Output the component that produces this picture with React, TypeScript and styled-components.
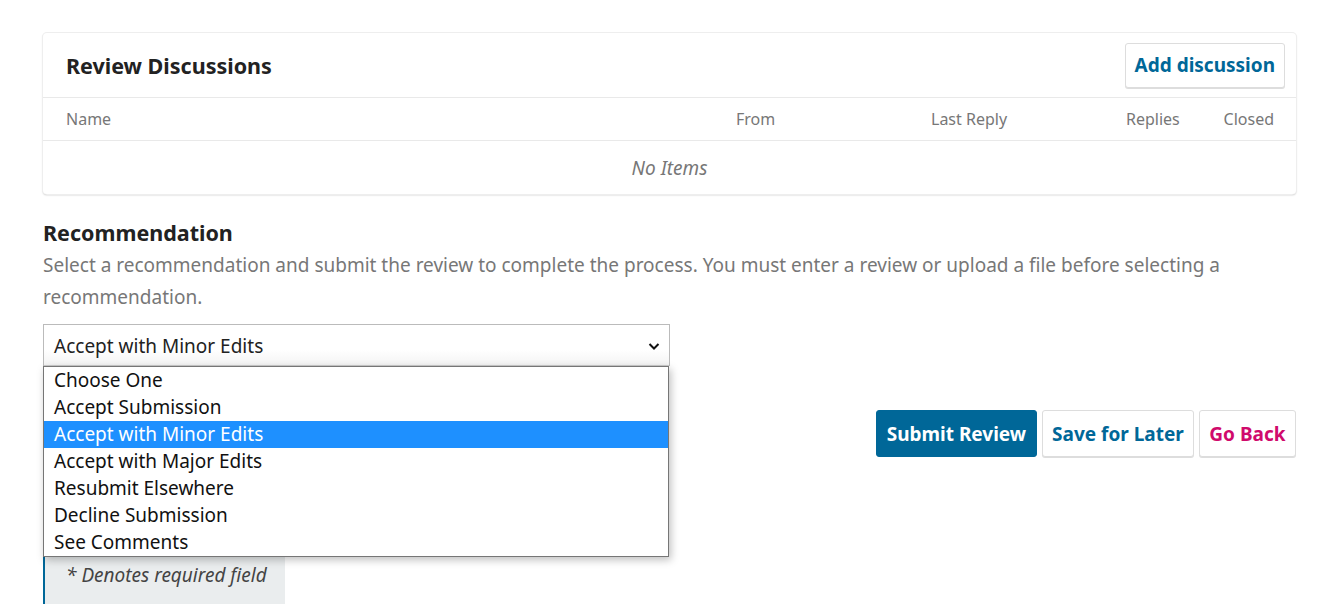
import React from "react";
import styled, { createGlobalStyle } from "styled-components";

const Global = createGlobalStyle`
  html, body { margin: 0; padding: 0; background: #fff; }
  body { font-family: "Noto Sans", "Open Sans", sans-serif; color: rgba(0,0,0,0.87); }
  * { box-sizing: border-box; }
`;

const Page = styled.div`
  width: 1333px;
  height: 604px;
  overflow: hidden;
  padding: 33px 37px 0 43px;
`;

const Card = styled.section`
  background: #fff;
  border-radius: 4px;
  box-shadow: 0 0 0 1px #eee, 0 1px 2px rgba(0,0,0,0.28);
`;

const CardHeader = styled.div`
  height: 65px;
  display: flex;
  align-items: center;
  justify-content: space-between;
  padding: 0 11px 0 23px;
  border-bottom: 1px solid #e9e9e9;
`;

const Title = styled.h2`
  margin: 0;
  font-size: 21.5px;
  font-weight: 700;
  color: #222;
`;

const Button = styled.button<{ $variant?: "primary" | "default" | "danger" }>`
  font-family: "Noto Sans", sans-serif;
  font-size: 19px;
  font-weight: 700;
  height: ${(p) => (p.$variant ? "47px" : "45px")};
  padding: 0 ${(p) => (p.$variant === "primary" ? "10px" : p.$variant === "danger" ? "9.5px" : "9px")};
  border-radius: 3px;
  cursor: pointer;
  background: ${(p) => (p.$variant === "primary" ? "#006798" : "#fff")};
  color: ${(p) =>
    p.$variant === "primary" ? "#fff" : p.$variant === "danger" ? "#d00a6c" : "#006798"};
  border: 1px solid ${(p) => (p.$variant === "primary" ? "#006798" : "#ddd")};
  box-shadow: ${(p) => (p.$variant === "primary" ? "none" : "0 1px 0 #ddd")};
`;

const HeadRow = styled.div`
  display: grid;
  grid-template-columns: 670px 195px 195px 1fr auto;
  height: 43px;
  align-items: center;
  padding: 0 22px 0 23px;
  border-bottom: 1px solid #e9e9e9;
  font-size: 16px;
  color: #777;
`;

const HeadCell = styled.div<{ $align?: string }>`
  text-align: ${(p) => p.$align || "left"};
`;

const EmptyRow = styled.div`
  height: 53px;
  display: flex;
  align-items: center;
  justify-content: center;
  font-style: italic;
  font-size: 19px;
  color: #777;
`;

const Section = styled.div`
  margin-top: 25px;
`;

const Label = styled.h3`
  margin: 0 0 2px;
  font-size: 21.5px;
  font-weight: 700;
  color: #222;
  line-height: 28px;
`;

const Description = styled.p`
  margin: 0;
  font-size: 19px;
  line-height: 32px;
  color: #777;
`;

const SelectWrap = styled.div`
  position: relative;
  margin-top: 11px;
  width: 627px;
`;

const SelectBox = styled.div`
  height: 42px;
  border: 1px solid #bbb;
  border-bottom: none;
  display: flex;
  align-items: center;
  justify-content: space-between;
  padding: 0 8px 0 10px;
  font-size: 19px;
  color: #222;
  background: linear-gradient(#fff 60%, #f3f3f3);
  box-shadow: inset 0 -1px 0 #ccc;
`;

const ListBox = styled.ul`
  position: absolute;
  top: 42px;
  left: 0;
  width: 626px;
  margin: 0;
  padding: 0;
  list-style: none;
  background: #fff;
  border: 1px solid #767676;
  box-shadow: 2px 3px 8px rgba(0,0,0,0.25);
  z-index: 5;
`;

const Option = styled.li<{ $selected?: boolean }>`
  height: 27px;
  line-height: 27px;
  padding-left: 10px;
  font-size: 19px;
  color: ${(p) => (p.$selected ? "#fff" : "#111")};
  background: ${(p) => (p.$selected ? "#1e90ff" : "transparent")};
`;

const Actions = styled.div`
  display: flex;
  justify-content: flex-end;
  gap: 5px;
  margin-top: 44px;
`;

const Required = styled.div`
  margin-top: 100px;
  width: 242px;
  height: 60px;
  background: #eaedee;
  border-left: 2px solid #006798;
  padding: 5px 0 0 21px;
  font-size: 19px;
  font-style: italic;
  color: #444;
`;

const options = [
  "Choose One",
  "Accept Submission",
  "Accept with Minor Edits",
  "Accept with Major Edits",
  "Resubmit Elsewhere",
  "Decline Submission",
  "See Comments",
];

export default function App() {
  return (
    <>
      <Global />
      <Page>
        <Card>
          <CardHeader>
            <Title>Review Discussions</Title>
            <Button>Add discussion</Button>
          </CardHeader>
          <HeadRow>
            <HeadCell>Name</HeadCell>
            <HeadCell>From</HeadCell>
            <HeadCell>Last Reply</HeadCell>
            <HeadCell>Replies</HeadCell>
            <HeadCell $align="right">Closed</HeadCell>
          </HeadRow>
          <EmptyRow>No Items</EmptyRow>
        </Card>
        <Section>
          <Label>Recommendation</Label>
          <Description>
            Select a recommendation and submit the review to complete the process. You must enter a review or upload a file before selecting a recommendation.
          </Description>
          <SelectWrap>
            <SelectBox>
              <span>Accept with Minor Edits</span>
              <svg width="14" height="14" viewBox="0 0 14 14">
                <path d="M2.5 5 L7 9.5 L11.5 5" fill="none" stroke="#111" strokeWidth="2" />
              </svg>
            </SelectBox>
            <ListBox>
              {options.map((o) => (
                <Option key={o} $selected={o === "Accept with Minor Edits"}>
                  {o}
                </Option>
              ))}
            </ListBox>
          </SelectWrap>
          <Actions>
            <Button $variant="primary">Submit Review</Button>
            <Button $variant="default">Save for Later</Button>
            <Button $variant="danger">Go Back</Button>
          </Actions>
          <Required>* Denotes required field</Required>
        </Section>
      </Page>
    </>
  );
}
